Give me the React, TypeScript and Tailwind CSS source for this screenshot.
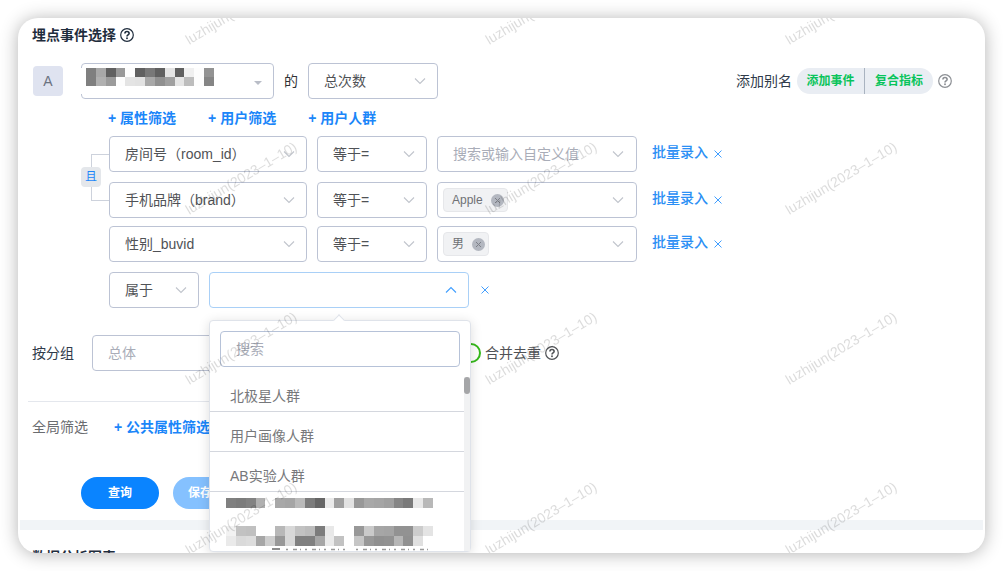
import { ReactNode } from "react";
import clsx from "clsx";

const quickFilters = ["属性筛选", "用户筛选", "用户人群"];

const crowds = ["北极星人群", "用户画像人群", "AB实验人群"];

const eventPixels = [
  "7f a8 60 99 fd 60 78 60 e4 60 f0 fd 93",
  "7f b0 9b fd e4 e2 a8 90 a0 e5 bd fd 85",
];

const crowdPixels = [
  "80 7c 82 b0 ff a8 a5 ba 7c 66 ea a0 e2 98 a8 a5 a0 86 7a e8 b8",
];

const crowdPixelsTall = [
  "f2 c2 c0 ff ff b8 d8 c2 bc 7c e8 ff ff 98 ca a6 a4 92 92 cc e4",
  "ea da dd a6 ce 98 d8 80 80 a6 ea c2 ff c6 98 90 92 b6 90 e0 ff",
];

function Mosaic({ rows, className }: { rows: string[]; className?: string }) {
  const cols = rows[0].split(" ").length;
  return (
    <svg
      viewBox={`0 0 ${cols} ${rows.length}`}
      preserveAspectRatio="none"
      shapeRendering="crispEdges"
      className={className}
      aria-hidden="true"
    >
      {rows.map((row, y) =>
        row
          .split(" ")
          .map((c, x) => (
            <rect key={`${x}-${y}`} x={x} y={y} width="1" height="1" fill={`#${c}${c}${c}`} />
          ))
      )}
    </svg>
  );
}

function Chevron({ up }: { up?: boolean }) {
  return (
    <svg
      viewBox="0 0 12 8"
      className={clsx(
        "pointer-events-none absolute right-3 top-1/2 h-2 w-3 -translate-y-1/2",
        up ? "text-[#409eff]" : "text-[#c0c4cc]"
      )}
      fill="none"
      stroke="currentColor"
      strokeWidth="1.1"
      aria-hidden="true"
    >
      <path d={up ? "M1 6.5 6 1.5l5 5" : "M1 1.5l5 5 5-5"} />
    </svg>
  );
}

function Help({ className }: { className?: string }) {
  return (
    <svg
      viewBox="0 0 14 14"
      className={clsx("h-[14px] w-[14px] shrink-0", className)}
      fill="none"
      stroke="currentColor"
      strokeWidth="1.2"
      aria-hidden="true"
    >
      <circle cx="7" cy="7" r="6.3" />
      <path d="M4.9 5.6C4.9 4.3 5.8 3.5 7 3.5s2.1.8 2.1 1.9c0 1.5-2.1 1.6-2.1 3.1" strokeWidth="1.6" />
      <circle cx="7" cy="10.3" r=".95" fill="currentColor" stroke="none" />
    </svg>
  );
}

function Select({
  label,
  value,
  width,
  muted,
}: {
  label: string;
  value: string;
  width: string;
  muted?: boolean;
}) {
  return (
    <div className={clsx("relative h-9 shrink-0", width)}>
      <select
        aria-label={label}
        className={clsx(
          "h-full w-full appearance-none rounded border border-[#bcc3d4] bg-white pl-[15px] pr-8",
          muted ? "text-[#a9adb8]" : "text-[#505256]"
        )}
      >
        <option>{value}</option>
      </select>
      <Chevron />
    </div>
  );
}

function TagBox({ label, tag }: { label: string; tag?: string }) {
  return (
    <div className="relative flex h-9 w-[200px] shrink-0 items-center rounded border border-[#bcc3d4] bg-white pl-[5px] pr-8">
      {tag && (
        <span className="flex h-6 shrink-0 items-center gap-2 rounded border border-[#e6e7ea] bg-[#f1f2f4] pl-2 pr-[3px] text-xs text-[#6f7175]">
          {tag}
          <button aria-label={`移除${tag}`}>
            <svg viewBox="0 0 13 13" className="h-[13px] w-[13px]" aria-hidden="true">
              <circle cx="6.5" cy="6.5" r="6.5" fill="#b3b7c0" />
              <path d="M4 4l5 5M9 4l-5 5" stroke="#7d8088" strokeWidth="1" />
            </svg>
          </button>
        </span>
      )}
      <input
        aria-label={label}
        placeholder={tag ? "" : "搜索或输入自定义值"}
        className={clsx(
          "w-full min-w-0 bg-transparent outline-none placeholder:text-[#a9adb8]",
          !tag && "pl-[10px]"
        )}
      />
      <Chevron />
    </div>
  );
}

function Remove({ className }: { className?: string }) {
  return (
    <button aria-label="删除" className={clsx("text-[#409eff]", className)}>
      <svg viewBox="0 0 8 8" className="h-2 w-2" stroke="currentColor" aria-hidden="true">
        <path d="M.5.5l7 7M7.5.5l-7 7" />
      </svg>
    </button>
  );
}

function FilterRow({ field, tag }: { field: string; tag?: string }) {
  return (
    <div className="flex items-center gap-[10px]">
      <Select label="属性" value={field} width="w-[198px]" />
      <Select label="条件" value="等于=" width="w-[110px]" />
      <TagBox label="值" tag={tag} />
      <a href="#" className="ml-[5px] shrink-0 pb-1 font-medium text-[#2b8ff5]">
        批量录入
      </a>
      <Remove className="-ml-1" />
    </div>
  );
}

function AddLink({ children }: { children: ReactNode }) {
  return (
    <a href="#" className="shrink-0 font-bold text-[#1b86f9]">
      + {children}
    </a>
  );
}

function CrowdMenu() {
  return (
    <div className="absolute left-0 top-12 z-10 w-[262px] rounded border border-[#dfe3ea] bg-white pt-[10px] shadow-[0_2px_12px_rgba(0,0,0,0.14)]">
      <span className="absolute -top-[5px] left-[125px] h-2 w-2 rotate-45 border-l border-t border-[#dfe3ea] bg-white" />
      <input
        aria-label="搜索人群"
        placeholder="搜索"
        className="mx-[10px] block h-9 w-[240px] rounded border border-[#b6c2d8] px-[15px] outline-none placeholder:text-[#a9adb8]"
      />
      <div className="mt-[5px] flex">
        <ul className="flex-1 text-[#77787b]">
          {crowds.map((name) => (
            <li key={name} className="h-10 border-b border-[#d4d7de] pl-5 pt-[14px] leading-5">
              {name}
            </li>
          ))}
          <li className="pl-4 pt-[6px]">
            <Mosaic rows={crowdPixels} className="h-[10px] w-[207px]" />
          </li>
          <li className="pl-4 pt-[18px]">
            <Mosaic rows={crowdPixelsTall} className="h-5 w-[207px]" />
          </li>
          <li className="pl-[62px] pt-[2px]">
            <svg viewBox="0 0 160 3" className="h-[3px] w-40" aria-hidden="true">
              <path d="M0 1h8" stroke="#666" strokeWidth="1.5" />
              <path
                d="M14 1.5h64M84 1.5h76"
                stroke="#999"
                strokeWidth="1.5"
                strokeDasharray="2 5 4 3 1 4"
              />
            </svg>
          </li>
        </ul>
        <div className="mt-[5px] w-[6px] bg-[#f1f2f3]">
          <div className="h-[17px] rounded-full bg-[#a5a6a8]" />
        </div>
      </div>
    </div>
  );
}

function Watermark() {
  return (
    <svg className="pointer-events-none absolute inset-0 z-20 h-full w-full" aria-hidden="true">
      <defs>
        <pattern id="wm" x="73" y="75" width="300" height="170" patternUnits="userSpaceOnUse">
          <text
            x="150"
            y="90"
            textAnchor="middle"
            transform="rotate(-31 150 85)"
            fontSize="14"
            fill="#000"
            fillOpacity="0.14"
          >
            luzhijun(2023–1–10)
          </text>
        </pattern>
      </defs>
      <rect width="100%" height="100%" fill="url(#wm)" />
    </svg>
  );
}

export default function App() {
  return (
    <main className="h-screen bg-white p-[18px] font-['Liberation_Sans','Noto_Sans_CJK_SC',sans-serif] text-sm text-[#505256]">
      <div className="relative h-full overflow-hidden rounded-[20px] bg-white shadow-[0_1px_18px_rgba(0,0,0,0.3)]">
        <h2 className="flex h-[34px] items-center gap-1 pl-[14px] font-bold text-[#1f2d3d]">
          埋点事件选择
          <Help />
        </h2>

        <section className="pt-[11px]">
          <div className="flex h-9 items-center pl-[15px] pr-[33px]">
            <span className="flex h-[30px] w-[30px] items-center justify-center rounded-sm bg-[#dfe3f0] text-[#6b7280]">
              A
            </span>
            <div className="relative ml-[18px] h-9 w-[193px]">
              <select
                aria-label="事件"
                className="h-full w-full appearance-none rounded border border-[#bcc3d4] bg-white"
              />
              <div className="absolute left-0 top-[5px] h-[26px] w-[150px] bg-white pl-[5px]">
                <Mosaic rows={eventPixels} className="h-[18px] w-32" />
              </div>
              <svg
                viewBox="0 0 8 4"
                className="absolute right-3 top-[18px] h-1 w-2"
                fill="#b9bdc7"
                aria-hidden="true"
              >
                <path d="M0 0h8L4 4z" />
              </svg>
            </div>
            <span className="mx-[10px] text-[#303133]">的</span>
            <Select label="指标" value="总次数" width="w-[130px]" />
            <a href="#" className="ml-auto mr-[5px] text-[#303b4a]">
              添加别名
            </a>
            <div className="flex h-[26px] divide-x divide-[#a9b3c0] overflow-hidden rounded-full bg-[#e9edf3] text-xs font-bold text-[#09c45b]">
              <button className="w-[68px]">添加事件</button>
              <button className="w-[68px]">复合指标</button>
            </div>
            <Help className="ml-[5px] text-[#8c8f94]" />
          </div>

          <div className="flex h-[37px] items-center gap-8 pl-[90px]">
            {quickFilters.map((name) => (
              <AddLink key={name}>{name}</AddLink>
            ))}
          </div>

          <div className="flex pl-[63px]">
            <div className="relative w-7 shrink-0 pt-[18px]">
              <div className="ml-[10px] h-[47px] border-y border-l border-[#cdd2dc]" />
              <span className="absolute left-0 top-[31px] flex h-5 w-5 items-center justify-center rounded bg-[#e4e7eb] text-xs text-[#1b86f9]">
                且
              </span>
            </div>
            <div>
              <FilterRow field="房间号（room_id）" />
              <div className="mb-2 mt-[10px]">
                <FilterRow field="手机品牌（brand）" tag="Apple" />
              </div>
              <FilterRow field="性别_buvid" tag="男" />
              <div className="mt-[10px] flex items-center gap-[10px]">
                <Select label="人群关系" value="属于" width="w-[90px]" />
                <div className="relative h-9 w-[260px]">
                  <input
                    aria-label="选择人群"
                    className="h-full w-full rounded border border-[#a9d0f7] bg-white px-[15px] outline-none"
                  />
                  <Chevron up />
                  <CrowdMenu />
                </div>
                <Remove className="ml-[2px]" />
              </div>
            </div>
          </div>
        </section>

        <div className="mt-[27px] flex h-9 items-center pl-[14px]">
          <span className="mr-[18px] text-[#303b4a]">按分组</span>
          <Select label="按分组" value="总体" width="w-[360px]" muted />
          <label className="ml-[9px] flex items-center gap-1">
            <input
              type="checkbox"
              className="h-5 w-5 appearance-none rounded-full border-2 border-[#35b91b] bg-white"
            />
            合并去重
            <Help />
          </label>
        </div>

        <hr className="ml-[10px] mt-[30px] w-[440px] border-[#e4e7ed]" />

        <div className="mt-[14px] flex h-[21px] items-center gap-[26px] pl-[14px] text-[#6a6c70]">
          全局筛选
          <AddLink>公共属性筛选</AddLink>
        </div>

        <div className="mt-10 flex gap-[14px] pl-[63px] text-xs font-bold text-white">
          <button className="h-8 w-[78px] rounded-full bg-[#0a84ff]">查询</button>
          <button className="h-8 w-[78px] rounded-full bg-[#85c1ff]">保存查询</button>
        </div>

        <div className="mx-[2px] mt-[11px] h-[10px] bg-[#f1f4f7]" />
        <h2 className="pl-[14px] pt-[17px] font-bold leading-5 text-[#1f2d3d]">数据分析图表</h2>

        <Watermark />
      </div>
    </main>
  );
}
